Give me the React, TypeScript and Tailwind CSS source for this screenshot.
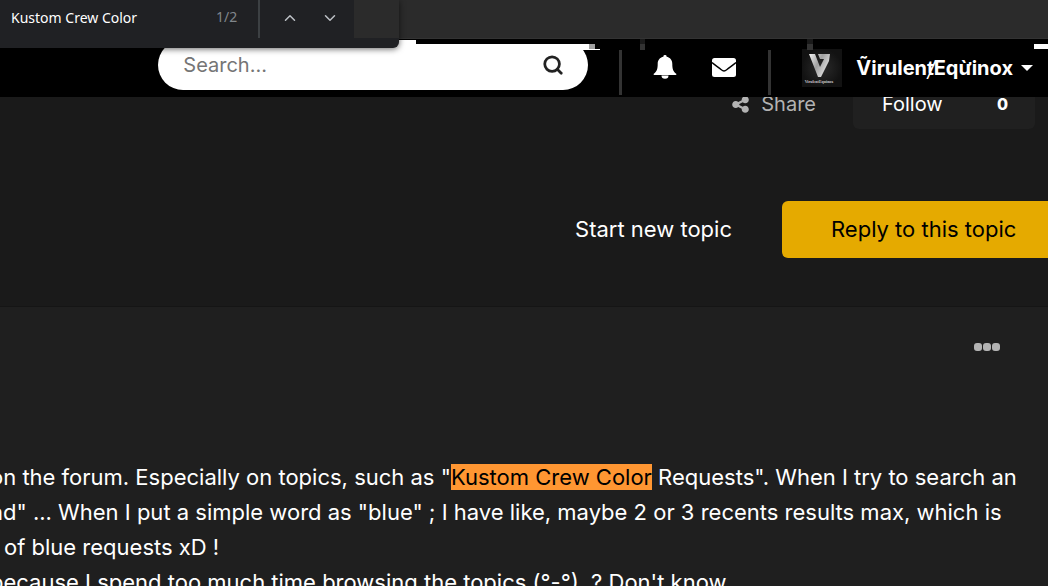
import { FaShareNodes } from "react-icons/fa6";
import { ChevronDown, ChevronUp, Search } from "lucide-react";

function BellIcon() {
  return (
    <svg viewBox="0 0 24 24" className="size-6" fill="currentColor" aria-hidden="true">
      <path d="M12 0a1.6 1.6 0 0 1 1.6 1.8C17.200 2.500 19.300 5.300 19.300 9c0 5 .9 7.700 3.900 9.700.5.500.2 1.300-.6 1.300H1.400c-.8 0-1.100-.8-.6-1.300C3.800 16.700 4.700 14 4.700 9c0-3.700 2.100-6.500 5.700-7.200A1.600 1.600 0 0 1 12 0z" />
      <path d="M8.500 20.500h7a3.500 3.300 0 0 1-7 0z" />
    </svg>
  );
}

function EnvelopeIcon() {
  return (
    <svg viewBox="0 0 24 19" className="h-[19px] w-6" aria-hidden="true">
      <rect width="24" height="19" rx="2.500" fill="currentColor" />
      <path
        d="M0 4.500c3 2.500 6.500 5 9 7 1.200 1 2 1.500 3 1.500s1.800-.5 3-1.500c2.500-2 6-4.500 9-7"
        fill="none"
        stroke="#000"
        strokeWidth="1.400"
      />
    </svg>
  );
}

function Avatar() {
  return (
    <svg viewBox="0 0 40 38" className="h-[38px] w-10 shrink-0" aria-hidden="true">
      <defs>
        <linearGradient id="metal" x1="0" y1="0" x2="1" y2="0.6">
          <stop offset="0" stopColor="#f4f4f4" />
          <stop offset="0.5" stopColor="#a0a0a0" />
          <stop offset="1" stopColor="#e8e8e8" />
        </linearGradient>
        <radialGradient id="plate">
          <stop offset="0" stopColor="#2c2c2c" />
          <stop offset="1" stopColor="#121212" />
        </radialGradient>
      </defs>
      <rect width="40" height="38" fill="url(#plate)" />
      <path
        d="M7 5h6l5 13 4-8h-4l-2-5h12l-1 7-8 16h-3z"
        fill="url(#metal)"
      />
      <text
        x="17"
        y="34"
        textAnchor="middle"
        fontSize="4"
        fontWeight="700"
        fontFamily="'Liberation Serif', serif"
        fill="#c8c8c8"
      >
        VirulentEquinox
      </text>
    </svg>
  );
}

function FindBar() {
  return (
    <div
      role="search"
      className="absolute left-0 top-0 z-20 flex h-12 w-[399px] rounded-br-md bg-[#202124] font-['Noto_Sans','Open_Sans',sans-serif] text-sm shadow-[0_1px_6px_rgba(0,0,0,0.6)]"
    >
      <input
        aria-label="Find in page"
        defaultValue="Kustom Crew Color"
        className="h-[34px] w-[200px] bg-transparent pl-[11px] text-white outline-none"
      />
      <span className="h-[34px] w-[58px] pl-4 leading-[34px] text-[#80868b]">1/2</span>
      <span className="h-[38px] w-0.5 bg-[#3c4043]" />
      <button
        type="button"
        aria-label="Previous match"
        className="ml-5 flex h-9 w-5 items-center justify-center text-[#bdc1c6]"
      >
        <ChevronUp size={18} />
      </button>
      <button
        type="button"
        aria-label="Next match"
        className="ml-5 flex h-9 w-5 items-center justify-center text-[#bdc1c6]"
      >
        <ChevronDown size={18} />
      </button>
      {/* the toolbar covers the bar's right end */}
      <span className="ml-[14px] h-[38px] flex-1 bg-[#2b2b2b]" />
    </div>
  );
}

function HeaderStrips() {
  return (
    <div aria-hidden="true">
      <span className="absolute left-[399px] top-px h-1 w-[17px] bg-white" />
      <span className="absolute left-[416px] top-0 h-[5px] w-[190px] bg-black" />
      <span className="absolute left-[399px] top-[5px] h-1.5 w-[190px] bg-white" />
      <span className="absolute left-[589px] top-[5px] h-[5px] w-1.5 bg-[#a0a0a0]" />
      <span className="absolute left-[583px] top-[10px] h-px w-[17px] bg-white" />
      <span className="absolute left-[640px] top-0 h-[11px] w-[5px] border-t-[5px] border-[#1a1a1a] bg-[#333]" />
      <span className="absolute left-[807px] top-0 h-[11px] w-1.5 border-t-[5px] border-[#1a1a1a] bg-[#333]" />
      <span className="absolute right-0 top-[5px] h-[5px] w-3.5 bg-white" />
    </div>
  );
}

function Header() {
  return (
    <header className="relative z-10 flex h-[58px] justify-end bg-black text-white">
      <form className="mt-px flex h-[50px] w-[430px] items-center rounded-full bg-white pl-[25px] pr-6">
        <input
          type="search"
          aria-label="Search"
          placeholder="Search..."
          className="min-w-0 flex-1 text-xl outline-none placeholder:text-[#757575]"
        />
        <button type="button" aria-label="Submit search" className="text-[#222]">
          <Search size={22} strokeWidth={3} />
        </button>
      </form>
      <span className="ml-[31px] mt-[11px] h-[45px] w-[3px] bg-[#333]" />
      <nav className="flex items-center pb-0.5">
        <button type="button" aria-label="Notifications" className="ml-[31px]">
          <BellIcon />
        </button>
        <button type="button" aria-label="Messages" className="ml-[35px]">
          <EnvelopeIcon />
        </button>
      </nav>
      <span className="ml-8 mt-[11px] h-[45px] w-[3px] bg-[#333]" />
      <button type="button" className="ml-[31px] mr-[15px] flex items-center text-xl font-bold">
        <Avatar />
        <span className="ml-3.5 whitespace-nowrap">ṼirulenⱦEqừinox</span>
        <svg viewBox="0 0 12 6" className="ml-2 h-1.5 w-3" fill="currentColor" aria-hidden="true">
          <path d="M0 0h12L6 6z" />
        </svg>
      </button>
      <HeaderStrips />
    </header>
  );
}

export default function App() {
  return (
    <div className="relative h-screen overflow-hidden bg-[#1a1a1a] font-['Inter',sans-serif] text-white">
      <FindBar />
      <div className="h-[39px] border-b border-[#333] bg-[#2b2b2b]" />
      <Header />

      <main>
        <div className="-mt-4 flex h-12 justify-end pr-[13px] text-xl">
          <button
            type="button"
            className="mr-[37px] flex items-center gap-[11px] pb-0.5 text-[#b3b3b3]"
          >
            <FaShareNodes size={19} />
            Share
          </button>
          <div className="flex w-[182px] items-center rounded-md bg-[#202020] pb-0.5">
            <button type="button" className="ml-[29px]">
              Follow
            </button>
            <a href="#followers" className="ml-auto mr-[27px] text-base font-extrabold">
              0
            </a>
          </div>
        </div>

        <div className="mt-[72px] flex h-[57px] justify-end text-[22px]">
          <a href="#new" className="mr-[50px] flex items-center">
            Start new topic
          </a>
          <a
            href="#reply"
            className="flex w-[266px] items-center rounded-l-md bg-[#e5aa00] pl-[49px] text-black"
          >
            Reply to this topic
          </a>
        </div>

        <article className="mt-12 border-t border-[#151515] bg-[#1f1f1f]">
          <div className="flex justify-end pr-12 pt-9">
            <button type="button" aria-label="More options" className="flex gap-px">
              <span className="size-2 rounded-[3px] bg-[#b3b3b3]" />
              <span className="size-2 rounded-[3px] bg-[#b3b3b3]" />
              <span className="size-2 rounded-[3px] bg-[#b3b3b3]" />
            </button>
          </div>
          <div className="mt-[109px] whitespace-nowrap text-[22px] leading-[35px]">
            <p className="-ml-2.5">
              on the forum. Especially on topics, such as "
              <mark className="bg-[#ff9632] text-black">Kustom Crew Color</mark> Requests". When I
              try to search an
            </p>
            <p className="-ml-2.5">
              nd" ... When I put a simple word as "blue" ; I have like, maybe 2 or 3 recents
              results max, which is
            </p>
            <p className="ml-1">of blue requests xD !</p>
            <p className="-ml-2.5">
              because I spend too much time browsing the topics (°-°)&nbsp; ? Don't know
            </p>
          </div>
        </article>
      </main>
    </div>
  );
}
